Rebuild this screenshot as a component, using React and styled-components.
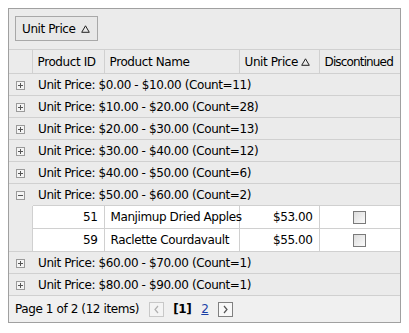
import React from "react";
import styled, { createGlobalStyle } from "styled-components";

const Global = createGlobalStyle`
  body {
    margin: 8px;
    font-family: Tahoma, "DejaVu Sans", sans-serif;
    font-size: 12px;
    letter-spacing: -0.4px;
    color: #000;
    background: #fff;
  }
`;

const Grid = styled.div`
  width: 391px;
  border: 1px solid #a0a0a0;
  background: #ebebeb;
`;

const GroupPanel = styled.div`
  height: 41px;
  padding: 7px 6px 0;
  box-sizing: border-box;
  border-bottom: 1px solid #d0d0d0;
`;

const GroupButton = styled.div`
  display: inline-flex;
  align-items: center;
  gap: 5px;
  height: 25px;
  padding: 0 7px 0 6px;
  box-sizing: border-box;
  border: 1px solid #a8a8a8;
  background: #e8e8e8;
`;

const Table = styled.table`
  width: 100%;
  border-collapse: collapse;
  table-layout: fixed;
`;

const Th = styled.th`
  height: 23px;
  padding: 0 5px;
  font-weight: normal;
  text-align: left;
  white-space: nowrap;
  letter-spacing: ${(p) => (p.$tight ? "-0.85px" : "inherit")};
  border-left: 1px solid #d0d0d0;
  border-bottom: 1px solid #d0d0d0;
  &:first-child {
    border-left: none;
  }
`;

const GroupCell = styled.td`
  height: 21px;
  padding: 0 6px;
  border-bottom: 1px solid #d0d0d0;
  white-space: nowrap;
`;

const Toggle = styled.td`
  height: 21px;
  padding: 0;
  text-align: center;
  border-bottom: 1px solid ${(p) => (p.$open ? "transparent" : "#d0d0d0")};
  svg {
    display: block;
    margin: 1px auto 0;
  }
`;

const Indent = styled.td`
  padding: 0;
  border-bottom: ${(p) => (p.$last ? "1px solid #d0d0d0" : "none")};
`;

const Cell = styled.td`
  height: 22px;
  padding: 0 6px;
  background: #fff;
  text-align: ${(p) => p.$align || "left"};
  border-left: 1px solid #d0d0d0;
  border-bottom: 1px solid #d0d0d0;
  white-space: nowrap;
`;

const CheckBox = styled.span`
  display: inline-block;
  width: 11px;
  height: 11px;
  vertical-align: middle;
  border: 1px solid #7a7a7a;
  background: linear-gradient(135deg, #dcdcdc, #fbfbfb);
`;

const Pager = styled.div`
  display: flex;
  align-items: center;
  height: 26px;
  padding: 0 6px;
  background: #f0f0f0;
`;

const PagerButton = styled.span`
  display: inline-flex;
  align-items: center;
  justify-content: center;
  width: 13px;
  height: 13px;
  border: 1px solid ${(p) => (p.$disabled ? "#c8c8c8" : "#808080")};
  background: ${(p) => (p.$disabled ? "#f4f4f4" : "#f8f8f8")};
  margin: 0 ${(p) => p.$mr || 0}px 0 ${(p) => p.$ml || 0}px;
`;

const Current = styled.span`
  font-weight: bold;
  margin-left: 9px;
`;

const PageLink = styled.span`
  color: #1a3fa6;
  text-decoration: underline;
  margin: 0 9px 0 10px;
`;

function Expander({ open }) {
  return (
    <svg width="9" height="9" viewBox="0 0 9 9">
      <rect x="0.5" y="0.5" width="8" height="8" fill="#f4f4f4" stroke="#9a9a9a" />
      <path d="M2 4.5h5" stroke="#555" />
      {!open && <path d="M4.5 2v5" stroke="#555" />}
    </svg>
  );
}

function Triangle() {
  return (
    <svg width="9" height="8" viewBox="0 0 9 8">
      <path d="M4.5 0.8 L8.3 7.3 H0.7 Z" fill="none" stroke="#222" strokeWidth="1" />
    </svg>
  );
}

function Arrow({ dir, color }) {
  return (
    <svg width="7" height="9" viewBox="0 0 7 9">
      <path d={dir === "left" ? "M5 1 L2 4.5 L5 8" : "M2 1 L5 4.5 L2 8"} fill="none" stroke={color} strokeWidth="1.2" />
    </svg>
  );
}

const groups = [
  { label: "Unit Price: $0.00 - $10.00 (Count=11)" },
  { label: "Unit Price: $10.00 - $20.00 (Count=28)" },
  { label: "Unit Price: $20.00 - $30.00 (Count=13)" },
  { label: "Unit Price: $30.00 - $40.00 (Count=12)" },
  { label: "Unit Price: $40.00 - $50.00 (Count=6)" },
  {
    label: "Unit Price: $50.00 - $60.00 (Count=2)",
    rows: [
      { id: 51, name: "Manjimup Dried Apples", price: "$53.00" },
      { id: 59, name: "Raclette Courdavault", price: "$55.00" },
    ],
  },
  { label: "Unit Price: $60.00 - $70.00 (Count=1)" },
  { label: "Unit Price: $80.00 - $90.00 (Count=1)" },
];

export default function App() {
  return (
    <>
      <Global />
      <Grid>
        <GroupPanel>
          <GroupButton>
            Unit Price <Triangle />
          </GroupButton>
        </GroupPanel>
        <Table>
          <colgroup>
            <col style={{ width: 23 }} />
            <col style={{ width: 72 }} />
            <col style={{ width: 135 }} />
            <col style={{ width: 80 }} />
            <col />
          </colgroup>
          <thead>
            <tr>
              <Th />
              <Th>Product ID</Th>
              <Th>Product Name</Th>
              <Th>
                Unit Price <Triangle />
              </Th>
              <Th $tight>Discontinued</Th>
            </tr>
          </thead>
          <tbody>
            {groups.map((g) => (
              <React.Fragment key={g.label}>
                <tr>
                  <Toggle $open={!!g.rows}>
                    <Expander open={!!g.rows} />
                  </Toggle>
                  <GroupCell colSpan={4}>{g.label}</GroupCell>
                </tr>
                {g.rows &&
                  g.rows.map((r, i) => (
                    <tr key={r.id}>
                      <Indent $last={i === g.rows.length - 1} />
                      <Cell $align="right">{r.id}</Cell>
                      <Cell>{r.name}</Cell>
                      <Cell $align="right">{r.price}</Cell>
                      <Cell $align="center">
                        <CheckBox />
                      </Cell>
                    </tr>
                  ))}
              </React.Fragment>
            ))}
          </tbody>
        </Table>
        <Pager>
          Page 1 of 2 (12 items)
          <PagerButton $disabled $ml={10}>
            <Arrow dir="left" color="#b0b0b0" />
          </PagerButton>
          <Current>[1]</Current>
          <PageLink>2</PageLink>
          <PagerButton>
            <Arrow dir="right" color="#555" />
          </PagerButton>
        </Pager>
      </Grid>
    </>
  );
}
